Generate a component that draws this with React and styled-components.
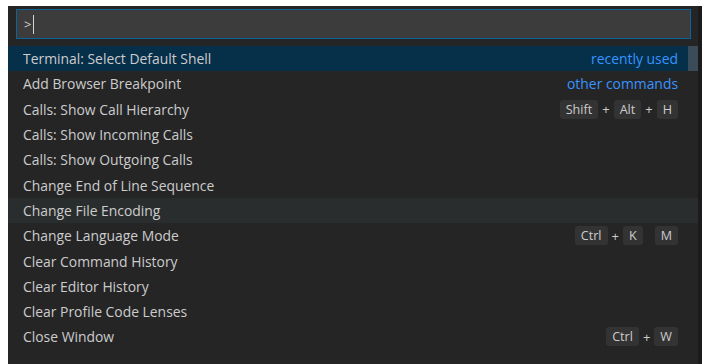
import React from 'react';
import styled, { createGlobalStyle } from 'styled-components';

const Global = createGlobalStyle`
  html, body { margin: 0; padding: 0; background: #ffffff; }
  body { font-family: "Open Sans", "Noto Sans", sans-serif; }
`;

const commands = [
  { label: 'Terminal: Select Default Shell', tag: 'recently used', selected: true },
  { label: 'Add Browser Breakpoint', tag: 'other commands' },
  { label: 'Calls: Show Call Hierarchy', keys: [['Shift', 'Alt', 'H']] },
  { label: 'Calls: Show Incoming Calls' },
  { label: 'Calls: Show Outgoing Calls' },
  { label: 'Change End of Line Sequence' },
  { label: 'Change File Encoding', hover: true },
  { label: 'Change Language Mode', keys: [['Ctrl', 'K'], ['M']] },
  { label: 'Clear Command History' },
  { label: 'Clear Editor History' },
  { label: 'Clear Profile Code Lenses' },
  { label: 'Close Window', keys: [['Ctrl', 'W']] },
];

export default function App() {
  return <>
    <Global />
    <Page>
      <Palette>
        <InputWrap>
          <Input>
            <span>&gt;</span><Caret />
          </Input>
        </InputWrap>
        <List>
          {commands.map((c, i) =>
            <Row key={i} $selected={c.selected} $hover={c.hover}>
              <Label>{c.label}</Label>
              {c.tag && <Tag>{c.tag}</Tag>}
              {c.keys && <Keys>
                {c.keys.map((chord, j) =>
                  <Chord key={j}>
                    {chord.map((k, n) =>
                      <React.Fragment key={n}>
                        {n > 0 && <Plus>+</Plus>}
                        <Key>{k}</Key>
                      </React.Fragment>
                    )}
                  </Chord>
                )}
              </Keys>}
              {c.selected && <Thumb />}
            </Row>
          )}
        </List>
      </Palette>
    </Page>
  </>
}

const Page = styled.div`
  padding: 6px 0 0 8px;
  height: 358px;
  overflow: hidden;
`;

const Palette = styled.div`
  width: 690px;
  height: 358px;
  background: #252526;
  box-shadow: 4px 0 0 #1b1b1c;
  color: #cccccc;
  font-size: 13.9px;
`;

const InputWrap = styled.div`
  padding: 3px 7px 7px 8px;
`;

const Input = styled.div`
  height: 28px;
  border: 1px solid #0e639c;
  background: #3c3c3c;
  display: flex;
  align-items: center;
  padding-left: 7px;
  color: #cccccc;
  font-size: 13px;
`;

const Caret = styled.span`
  display: inline-block;
  width: 1px;
  height: 19px;
  margin-left: 2px;
  background: #d4d4d4;
`;

const List = styled.div`
  display: flex;
  flex-direction: column;
`;

const Row = styled.div`
  position: relative;
  height: 25.3px;
  display: flex;
  align-items: center;
  padding: 0 20px 0 15px;
  background: ${p => p.$selected ? '#062f4a' : p.$hover ? '#2a2d2e' : 'transparent'};
`;

const Label = styled.span`
  flex: 1;
  white-space: nowrap;
`;

const Tag = styled.span`
  color: #3794ff;
  font-size: 13.9px;
`;

const Thumb = styled.div`
  position: absolute;
  right: 0;
  top: 0;
  width: 10px;
  height: 100%;
  background: #3a4b59;
`;

const Keys = styled.div`
  display: flex;
  gap: 12px;
`;

const Chord = styled.div`
  display: flex;
  align-items: center;
`;

const Key = styled.span`
  display: inline-block;
  background: #333334;
  border-radius: 3px;
  padding: 0 6px;
  height: 19px;
  line-height: 19px;
  font-size: 12.6px;
  color: #cccccc;
`;

const Plus = styled.span`
  margin: 0 4px;
  font-size: 13px;
`;
